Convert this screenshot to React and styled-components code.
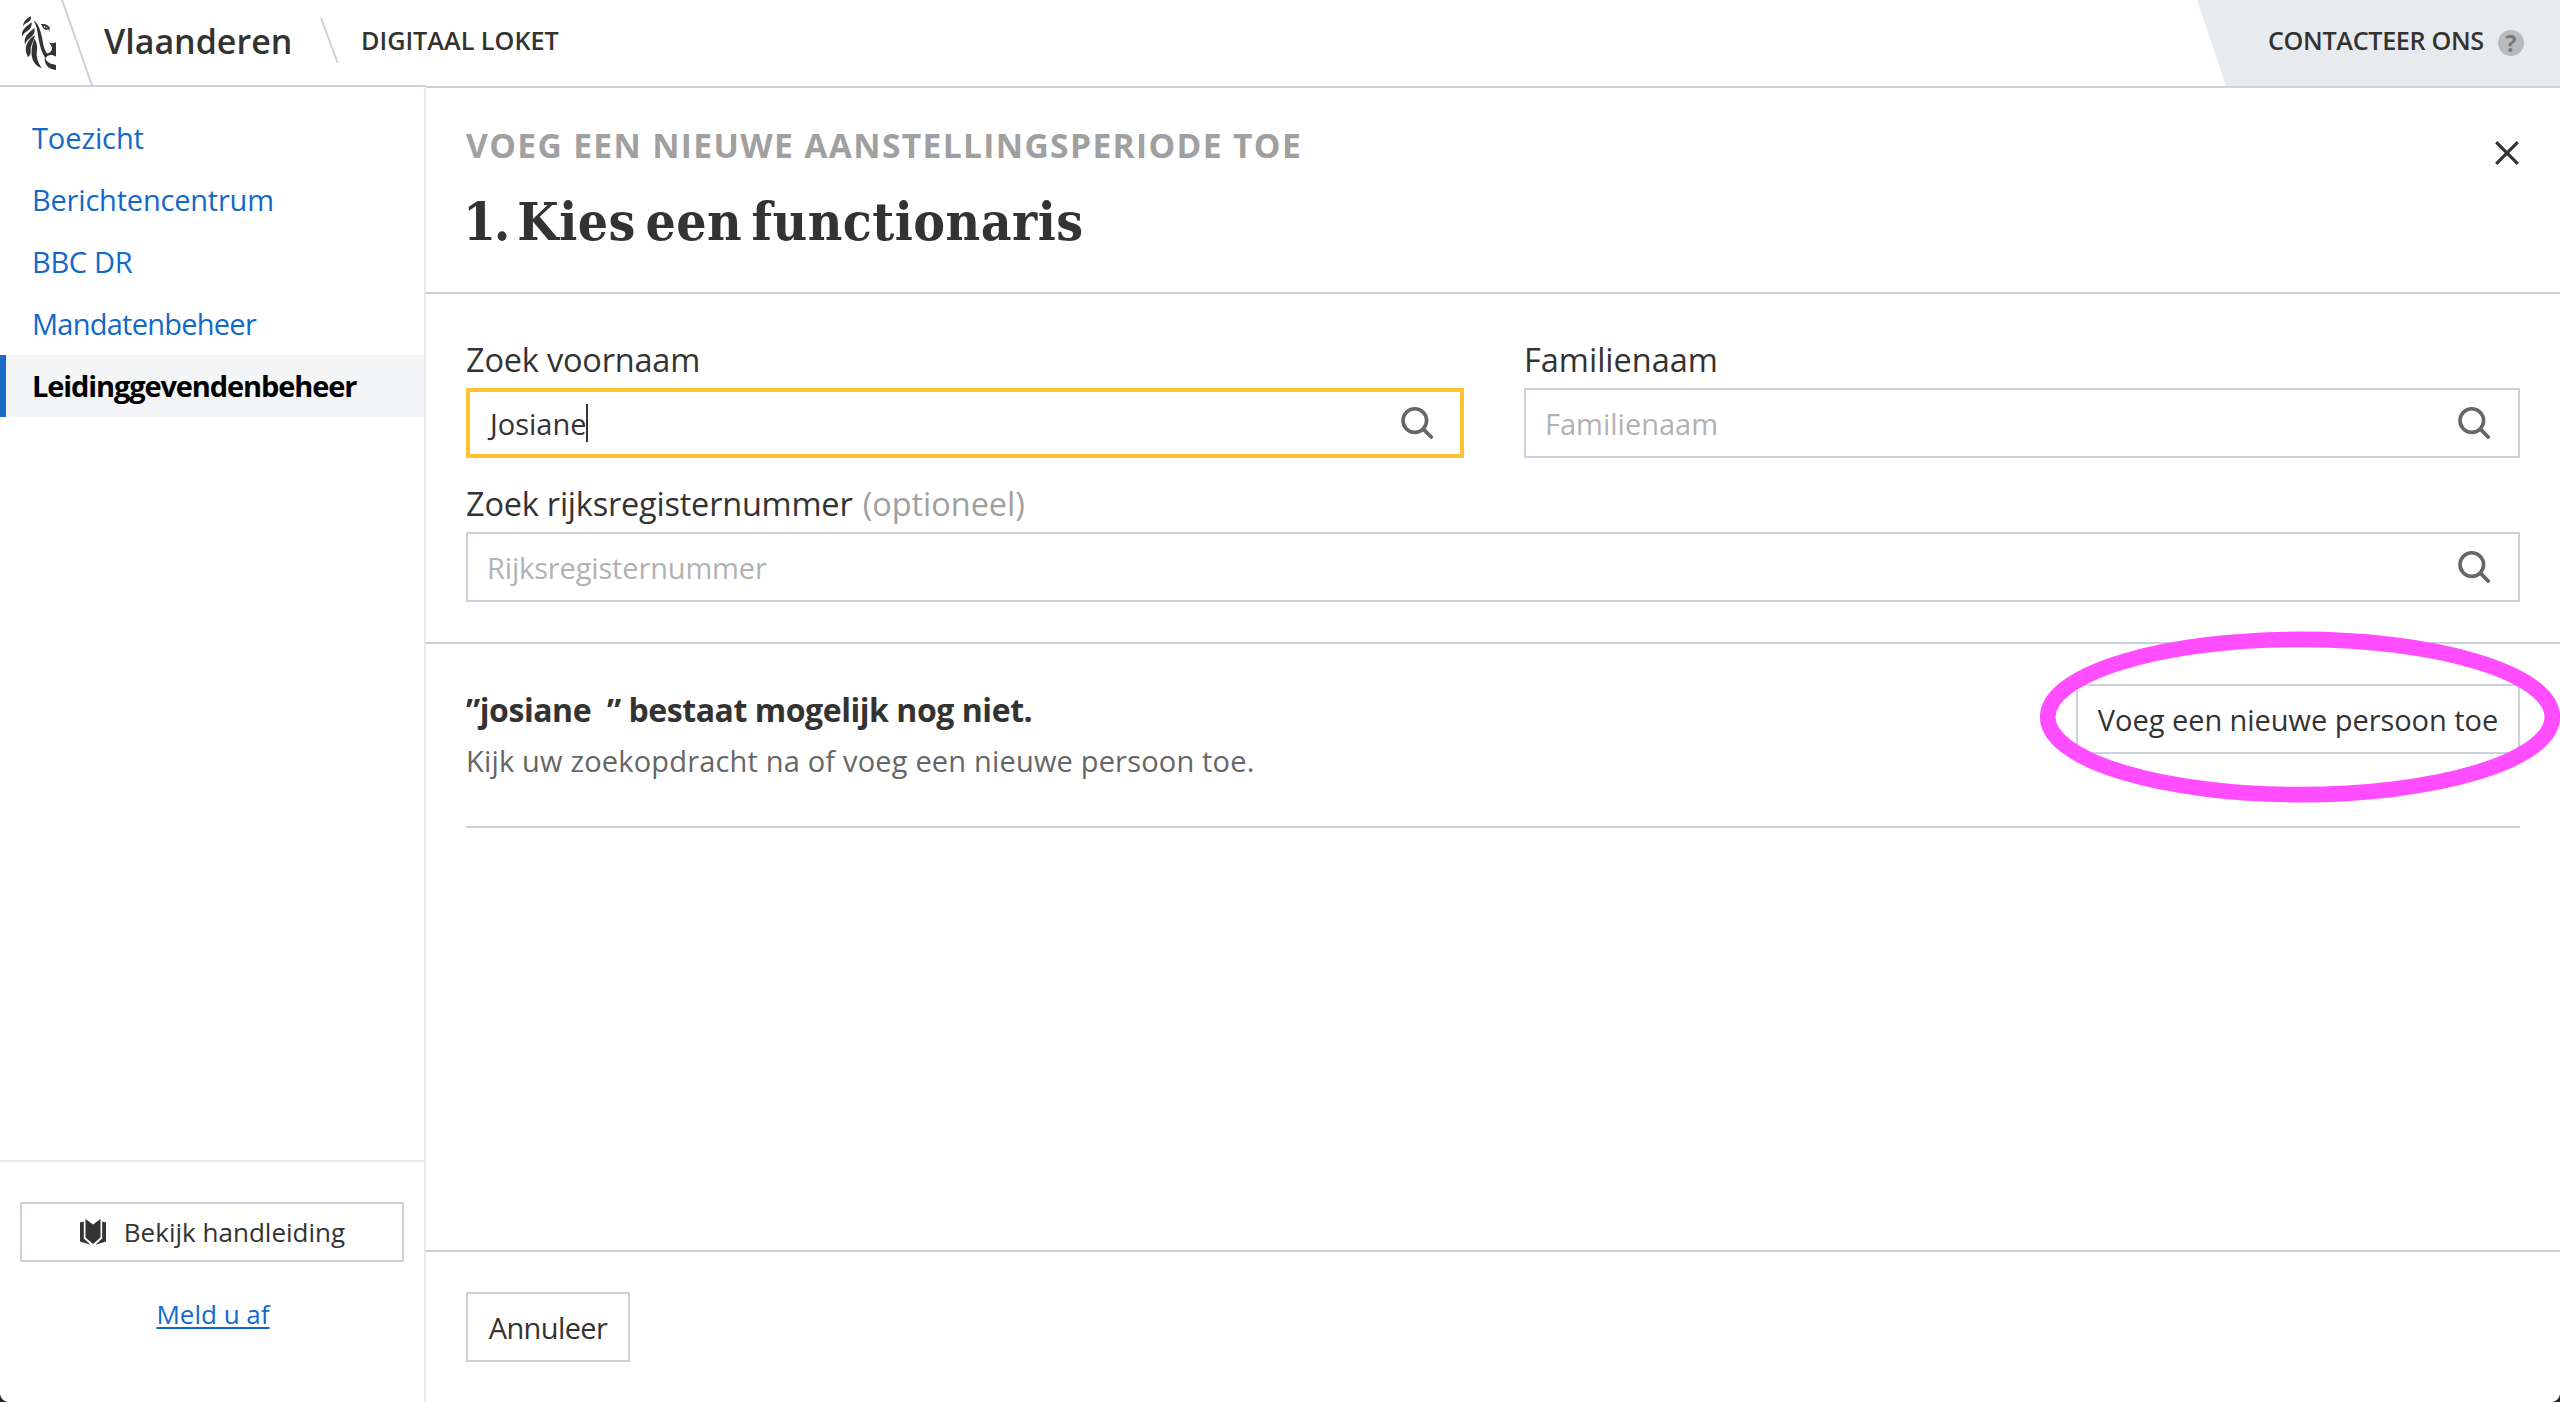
import React from "react";
import styled, { createGlobalStyle } from "styled-components";

const line = "#cbd2dc";
const softLine = "#e7ebef";
const ink = "#333332";
const blue = "#1269cb";

const GlobalStyle = createGlobalStyle`
  *, *::before, *::after { box-sizing: border-box; }
  body {
    margin: 0;
    background: #fff;
    color: ${ink};
    font-family: "Open Sans", "Noto Sans", sans-serif;
    font-size: 29px;
    -webkit-font-smoothing: antialiased;
  }
`;

const Page = styled.div`
  position: relative;
  display: flex;
  flex-direction: column;
  width: 100%;
  height: 100vh;
  overflow: hidden;
  background: #fff;
`;

const Header = styled.header`
  display: flex;
  flex: none;
  height: 88px;
`;

const Brand = styled.div`
  display: flex;
  flex: none;
  align-items: flex-start;
  width: 426px;
  height: 87px;
  border-bottom: 2px solid ${line};
`;

const BrandMark = styled.svg`
  flex: none;
  width: 100px;
  height: 85px;
`;

const BrandName = styled.span`
  flex: none;
  width: 216px;
  padding-left: 4px;
  line-height: 82px;
  font-size: 34px;
  font-weight: 600;
`;

const Slash = styled.svg`
  flex: none;
  width: 24px;
  height: 85px;
`;

const SiteName = styled.span`
  flex: none;
  padding-left: 21px;
  line-height: 81px;
  font-size: 25.2px;
  font-weight: 600;
  white-space: nowrap;
`;

const HeaderRest = styled.div`
  display: flex;
  flex: 1;
  justify-content: flex-end;
  height: 88px;
  border-bottom: 2px solid ${line};
`;

const ContactTab = styled.a`
  display: flex;
  align-items: flex-start;
  width: 363px;
  padding-left: 71px;
  background: #e7ebee;
  clip-path: polygon(0 0, 100% 0, 100% 100%, 29px 100%);
  font-size: 25.2px;
  font-weight: 600;
  line-height: 81px;
  letter-spacing: -0.35px;
  white-space: nowrap;
`;

const HelpBadge = styled.span`
  flex: none;
  width: 26px;
  height: 26px;
  margin: 30px 36px 0 auto;
  border-radius: 50%;
  background: #b9babb;
  color: #777;
  font-size: 23px;
  font-weight: 700;
  line-height: 27px;
  letter-spacing: 0;
  text-align: center;
`;

const Body = styled.div`
  display: flex;
  flex: 1;
  min-height: 0;
`;

const Sidebar = styled.aside`
  display: flex;
  flex: none;
  flex-direction: column;
  justify-content: space-between;
  width: 426px;
  border-right: 2px solid ${softLine};
`;

const Nav = styled.nav`
  display: flex;
  flex-direction: column;
  padding-top: 19px;
`;

const NavItem = styled.a`
  height: 62px;
  padding-left: 26px;
  border-left: 6px solid ${(p) => (p.$active ? "#1b6bcb" : "transparent")};
  background: ${(p) => (p.$active ? "#f3f5f6" : "transparent")};
  color: ${(p) => (p.$active ? "#000" : blue)};
  font-weight: ${(p) => (p.$active ? 700 : 400)};
  line-height: 62px;
  letter-spacing: ${(p) => p.$track || 0}px;
`;

const SidebarFooter = styled.div`
  display: flex;
  flex-direction: column;
  align-items: center;
  height: 242px;
  padding: 40px 20px 0;
  border-top: 2px solid ${softLine};
`;

const Button = styled.button`
  display: flex;
  flex: none;
  align-items: center;
  justify-content: center;
  width: ${(p) => p.$width}px;
  height: ${(p) => p.$height || 70}px;
  padding: 0;
  border: 2px solid ${line};
  background: #fff;
  color: ${ink};
  font-family: inherit;
  font-size: ${(p) => p.$size || 29}px;
  letter-spacing: ${(p) => p.$track || 0}px;
  white-space: nowrap;
`;

const BookIcon = styled.svg`
  width: 26px;
  height: 26px;
  margin: 0 18px 0 1px;
`;

const Logout = styled.a`
  margin-top: 32px;
  padding-left: 2px;
  color: ${blue};
  font-size: 26px;
  line-height: 40px;
  text-decoration: underline;
  text-decoration-thickness: 2px;
  text-underline-offset: 3px;
  text-decoration-skip-ink: none;
`;

const Main = styled.main`
  display: flex;
  flex: 1;
  flex-direction: column;
  min-width: 0;
`;

const Heading = styled.div`
  display: flex;
  justify-content: space-between;
  height: 206px;
  padding: 33px 41px 0 40px;
  border-bottom: 2px solid ${line};
`;

const Eyebrow = styled.div`
  margin-bottom: 17px;
  color: #a0a0a0;
  font-size: 33.6px;
  font-weight: 700;
  line-height: 48px;
  letter-spacing: 1.35px;
`;

const Title = styled.h1`
  margin: 0;
  font-family: "DejaVu Serif Condensed", "DejaVu Serif", serif;
  font-size: 53px;
  font-stretch: condensed;
  font-weight: 700;
  line-height: 70px;
  letter-spacing: 0.45px;
  word-spacing: -7.5px;
`;

const StepNumber = styled.span`
  margin-left: -3px;
  letter-spacing: -2.5px;
`;

const CloseIcon = styled.svg`
  width: 24px;
  height: 24px;
  margin-top: 20px;
`;

const SearchForm = styled.form`
  display: grid;
  grid-template-columns: 998px 1fr;
  column-gap: 60px;
  row-gap: 23px;
  padding: 43px 40px 40px;
  border-bottom: 2px solid ${line};
`;

const Field = styled.div`
  display: flex;
  flex-direction: column;
  gap: 7px;
  grid-column: ${(p) => (p.$wide ? "1 / -1" : "auto")};
`;

const Label = styled.label`
  font-size: 32.5px;
  line-height: 45px;
  height: 44px;
  letter-spacing: ${(p) => p.$track || 0}px;
`;

const Optional = styled.span`
  margin-left: 2px;
  color: #a0a0a0;
  letter-spacing: -0.05px;
`;

const InputBox = styled.div`
  display: flex;
  align-items: center;
  height: 70px;
  padding: 0 ${(p) => (p.$focused ? 27 : 28)}px 0 ${(p) => (p.$focused ? 20 : 19)}px;
  border: ${(p) => (p.$focused ? "4px solid #ffc332" : `2px solid ${line}`)};
  background: #fff;
`;

const InputText = styled.span`
  flex: 1;
  display: flex;
  align-items: center;
  color: ${(p) => (p.$placeholder ? "#b2b2b2" : ink)};
  letter-spacing: ${(p) => p.$track || 0}px;
`;

const Caret = styled.span`
  width: 2px;
  height: 38px;
  margin-left: -1px;
  background: ${ink};
`;

const Glass = styled.svg`
  width: 32px;
  height: 32px;
`;

const Result = styled.section`
  display: flex;
  justify-content: space-between;
  height: 184px;
  margin: 0 40px;
  padding-top: 40px;
  border-bottom: 2px solid ${line};
`;

const ResultText = styled.div`
  padding-top: 4px;
`;

const ResultTitle = styled.div`
  font-size: 32px;
  font-weight: 700;
  line-height: 44px;
  letter-spacing: -0.45px;
  white-space: pre;
`;

const ResultHint = styled.div`
  margin-top: 7px;
  color: #666;
  line-height: 44px;
  letter-spacing: 0.18px;
`;

const Footer = styled.footer`
  height: 152px;
  margin-top: auto;
  padding: 40px;
  border-top: 2px solid ${line};
`;

const Marker = styled.svg`
  position: absolute;
  top: 630px;
  right: 0;
  width: 522px;
  height: 174px;
  pointer-events: none;
`;

const WindowCorner = styled.span`
  position: absolute;
  bottom: 0;
  ${(p) => p.$side}: 0;
  width: 9px;
  height: 9px;
  background: radial-gradient(
    circle at ${(p) => (p.$side === "left" ? "100%" : "0")} 0,
    transparent 8.5px,
    #222 9.5px
  );
`;

const SearchIcon = () => (
  <Glass viewBox="0 0 32 32" fill="none" stroke="#666" strokeLinecap="round">
    <circle cx="13.8" cy="13.6" r="11.8" strokeWidth="3.6" />
    <path d="M22.3 22.2 L30.2 30" strokeWidth="3.8" />
  </Glass>
);

const nav = [
  { text: "Toezicht", track: -0.1 },
  { text: "Berichtencentrum", track: -0.2 },
  { text: "BBC DR", track: -0.3 },
  { text: "Mandatenbeheer", track: -0.75 },
  { text: "Leidinggevendenbeheer", track: -1.12, active: true },
];

export default function App() {
  return (
    <>
      <GlobalStyle />
      <Page>
        <Header>
          <Brand>
            <BrandMark viewBox="0 0 300 255" fill="#333332">
              <path d="M69 79 C70 64 80 56 92 48 C95 59 90 64 81 68 C75 71 72 74 69 79Z" />
              <path d="M67 110 C62 91 76 82 95 67 C96 81 90 88 81 94 C74 98 70 102 67 110Z" />
              <path d="M75 134 C70 112 83 100 103 84 C106 99 100 106 91 113 C83 119 78 124 75 134Z" />
              <path d="M84 171 C69 144 81 122 104 106 C103 124 93 133 92 147 C91 158 94 164 84 171Z" />
              <path d="M104 116 C88 150 91 193 125 204 C113 187 108 170 111 150 C113 138 110 128 104 116Z" />
              <path d="M101 62 C115 69 121 90 126 112 C130 136 133 153 144 164 L137 175 C124 157 119 136 115 112 C112 90 109 74 101 62Z" />
              <path d="M123 73 C134 69 144 75 150 83 L147 95 L145 87 C138 95 129 87 123 73Z M131 78 C133 84 138 87 143 83 C140 79 136 77 131 78Z" fillRule="evenodd" />
              <circle cx="138" cy="81" r="3" />
              <path d="M147 127 C154 132 161 130 168 127 V170 C158 163 149 164 141 169 L137 161 C147 160 154 156 156 146 C157 139 151 134 147 127Z" />
              <path d="M135 168 C137 184 144 190 168 195 V210 C146 208 130 194 135 168Z" />
              <path d="M185 -4 L277 259" stroke={line} strokeWidth="6" />
            </BrandMark>
            <BrandName>Vlaanderen</BrandName>
            <Slash viewBox="0 0 24 85">
              <path d="M5 18 L21.5 62.5" stroke={line} strokeWidth="2" />
            </Slash>
            <SiteName>DIGITAAL LOKET</SiteName>
          </Brand>
          <HeaderRest>
            <ContactTab>
              CONTACTEER ONS
              <HelpBadge>?</HelpBadge>
            </ContactTab>
          </HeaderRest>
        </Header>
        <Body>
          <Sidebar>
            <Nav>
              {nav.map((item) => (
                <NavItem key={item.text} $active={item.active} $track={item.track}>
                  {item.text}
                </NavItem>
              ))}
            </Nav>
            <SidebarFooter>
              <Button $width={384} $height={60} $size={26} $track={0.02}>
                <BookIcon viewBox="0 0 26 26" fill="#333332">
                  <path d="M5.5 0 L13 5.5 L20.5 0 V18.5 L13 25 L5.5 18.5Z" />
                  <path d="M0 3.5 L3.8 2.5 V19.5 L10.5 25.8 L0 22.5Z" />
                  <path d="M26 3.5 L22.2 2.5 V19.5 L15.5 25.8 L26 22.5Z" />
                </BookIcon>
                Bekijk handleiding
              </Button>
              <Logout>Meld u af</Logout>
            </SidebarFooter>
          </Sidebar>
          <Main>
            <Heading>
              <div>
                <Eyebrow>VOEG EEN NIEUWE AANSTELLINGSPERIODE TOE</Eyebrow>
                <Title>
                  <StepNumber>1.</StepNumber> Kies een functionaris
                </Title>
              </div>
              <CloseIcon viewBox="0 0 24 24" stroke={ink} strokeWidth="3.2">
                <path d="M1.2 1.2 L22.8 22.8 M22.8 1.2 L1.2 22.8" />
              </CloseIcon>
            </Heading>
            <SearchForm>
              <Field>
                <Label $track={-0.2}>Zoek voornaam</Label>
                <InputBox $focused>
                  <InputText>
                    Josiane
                    <Caret />
                  </InputText>
                  <SearchIcon />
                </InputBox>
              </Field>
              <Field>
                <Label>Familienaam</Label>
                <InputBox>
                  <InputText $placeholder>Familienaam</InputText>
                  <SearchIcon />
                </InputBox>
              </Field>
              <Field $wide>
                <Label $track={-0.22}>
                  Zoek rijksregisternummer <Optional>(optioneel)</Optional>
                </Label>
                <InputBox>
                  <InputText $placeholder $track={-0.15}>Rijksregisternummer</InputText>
                  <SearchIcon />
                </InputBox>
              </Field>
            </SearchForm>
            <Result>
              <ResultText>
                <ResultTitle>{"”josiane  ” bestaat mogelijk nog niet."}</ResultTitle>
                <ResultHint>Kijk uw zoekopdracht na of voeg een nieuwe persoon toe.</ResultHint>
              </ResultText>
              <Button $width={444} $track={-0.05}>Voeg een nieuwe persoon toe</Button>
            </Result>
            <Footer>
              <Button $width={164} $track={-0.6}>Annuleer</Button>
            </Footer>
          </Main>
        </Body>
        <Marker viewBox="0 0 522 174" fill="none">
          <ellipse cx="262" cy="87" rx="252.3" ry="77.6" stroke="#ff4dff" strokeWidth="15.6" />
        </Marker>
        <WindowCorner $side="left" />
        <WindowCorner $side="right" />
      </Page>
    </>
  );
}
